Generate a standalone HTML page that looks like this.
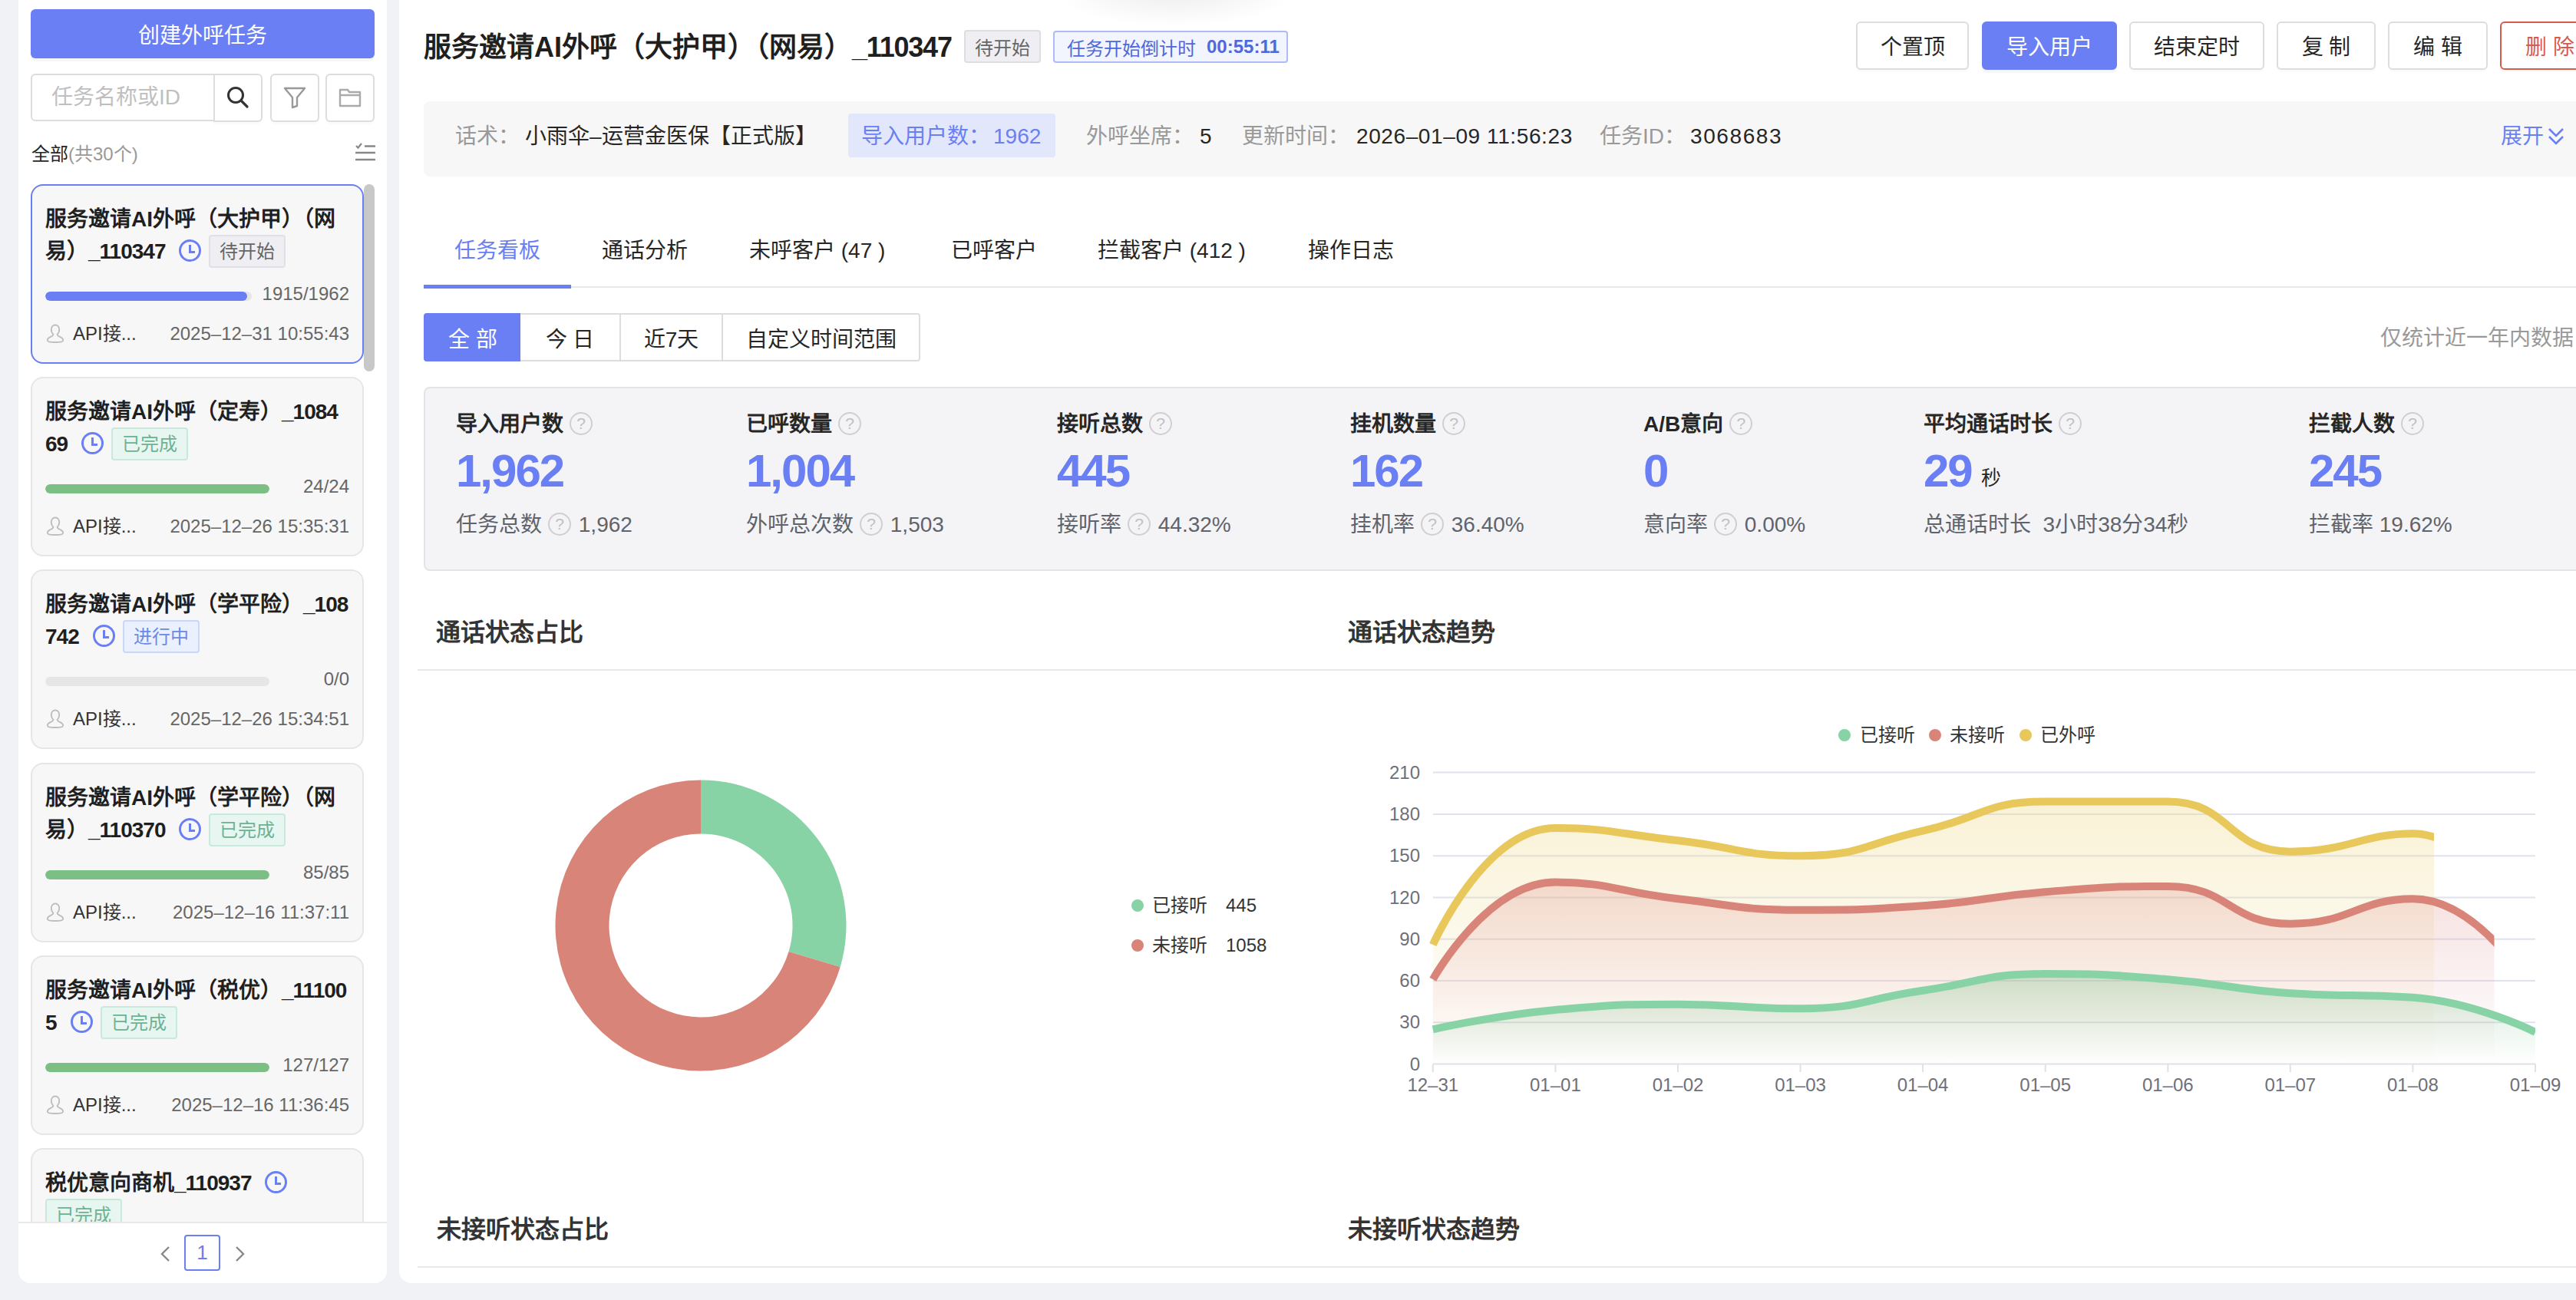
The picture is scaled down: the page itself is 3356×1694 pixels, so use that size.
<!DOCTYPE html>
<html lang="zh-CN"><head><meta charset="utf-8">
<style>
*{box-sizing:border-box;margin:0;padding:0}
html,body{width:3356px;height:1694px;overflow:hidden}
body{background:#f1f2f5;position:relative;font-family:"Liberation Sans",sans-serif;color:#262626}
.abs{position:absolute}
.panel{position:absolute;background:#fff;border-radius:16px}
.btn{position:absolute;border:2px solid #dcdde1;border-radius:6px;background:#fff;box-shadow:0 3px 0 rgba(0,0,0,0.015);padding-bottom:2px;font-size:28px;display:flex;align-items:center;justify-content:center;color:#262626}
.t{position:absolute;white-space:nowrap;line-height:1}
.card{position:absolute;left:40px;width:434px;height:234px;background:#f7f7f8;border:2px solid #e6e6ea;border-radius:16px;overflow:hidden}
.pc{letter-spacing:0}
.dg{letter-spacing:-1px}
.card .ttl{white-space:nowrap;position:absolute;left:17px;top:23px;width:400px;font-size:28px;font-weight:bold;line-height:42px;color:#1f1f1f}
.clock{display:inline-block;width:29px;height:29px;border:3px solid #6a7ff3;border-radius:50%;position:relative;vertical-align:middle;margin-left:18px;margin-right:10px;margin-top:-6px}
.clock:before{content:"";position:absolute;left:10px;top:4px;width:3px;height:10px;background:#6a7ff3}
.clock:after{content:"";position:absolute;left:10px;top:12px;width:8px;height:3px;background:#6a7ff3}
.badge{display:inline-block;font-size:24px;font-weight:normal;line-height:39px;height:43px;padding:0 12px;border:2px solid #e0e0e5;background:#efeff3;color:#666;border-radius:4px;vertical-align:middle;margin-left:0;margin-top:-4px}
.b-done{background:#e8f6f1;border-color:#c8e9dc;color:#6cb393}
.b-run{background:#eaf0fe;border-color:#c9d7fa;color:#6a8ae6}
.prog{position:absolute;left:17px;top:138px;height:12px;border-radius:6px;background:#e6e6e6;overflow:hidden}
.prog i{position:absolute;left:0;top:0;bottom:0;border-radius:6px}
.num{position:absolute;right:17px;top:129px;font-size:24px;color:#666;line-height:24px}
.user{position:absolute;left:18px;top:179px;width:24px;height:26px}
.api{position:absolute;left:53px;top:181px;font-size:24px;line-height:24px;color:#333}
.date{position:absolute;right:17px;top:181px;font-size:24px;line-height:24px;color:#666;letter-spacing:0}
.tab{position:absolute;top:313px;font-size:28px;line-height:28px;color:#262626}
.seg{position:absolute;top:408px;height:63px;border:2px solid #dcdde1;font-size:28px;display:flex;align-items:center;justify-content:center;color:#262626;background:#fff}
.stat{position:absolute;top:0}
.stat .lb{position:absolute;left:0;top:539px;font-size:28px;font-weight:bold;line-height:28px;white-space:nowrap;color:#262626}
.stat .big{position:absolute;left:0;top:584px;font-size:60px;font-weight:bold;line-height:60px;color:#6a7ff3;white-space:nowrap;letter-spacing:-2px}
.stat .sub{position:absolute;left:0;top:670px;font-size:28px;line-height:28px;color:#5f636b;white-space:nowrap}
.q{display:inline-block;width:30px;height:30px;border:2px solid #cfcfd2;border-radius:50%;color:#c0c0c3;font-size:21px;line-height:26px;text-align:center;font-weight:normal;vertical-align:top;margin-left:8px;margin-right:2px;position:relative;top:-2px}
.sec{position:absolute;font-size:32px;font-weight:bold;line-height:32px;color:#333;white-space:nowrap}
.lg{position:absolute;font-size:24px;line-height:24px;color:#333;white-space:nowrap}
.dot{position:absolute;width:16px;height:16px;border-radius:50%}
.ax{position:absolute;font-size:24px;line-height:24px;color:#6e7079;white-space:nowrap}
</style></head><body>
<!-- LEFT PANEL -->
<div class="panel" style="left:24px;top:-20px;width:480px;height:1692px"></div>
<div class="abs" style="left:40px;top:12px;width:448px;height:64px;background:#6a7ff3;border-radius:6px;color:#fff;font-size:28px;display:flex;align-items:center;justify-content:center;box-shadow:0 4px 0 rgba(0,0,0,0.03)">创建外呼任务</div>
<div class="abs" style="left:40px;top:96px;width:240px;height:62px;border:2px solid #dcdde1;border-radius:6px 0 0 6px"></div>
<div class="t" style="left:67px;top:113px;font-size:28px;color:#bfbfbf">任务名称或ID</div>
<div class="btn" style="left:278px;top:96px;width:64px;height:63px;border-radius:0 6px 6px 0">
<svg width="32" height="32" viewBox="0 0 32 32"><circle cx="13" cy="13" r="9.5" fill="none" stroke="#333" stroke-width="3"/><line x1="20" y1="20" x2="28" y2="28" stroke="#333" stroke-width="3.2" stroke-linecap="round"/></svg></div>
<div class="btn" style="left:352px;top:96px;width:64px;height:63px">
<svg width="32" height="32" viewBox="0 0 32 32"><path d="M3 4 H29 L19 16 V27 L13 29 V16 Z" fill="none" stroke="#999" stroke-width="2.4" stroke-linejoin="round"/></svg></div>
<div class="btn" style="left:424px;top:96px;width:64px;height:63px">
<svg width="32" height="32" viewBox="0 0 32 32"><path d="M3 6 H13 L15 9 H29 V27 H3 Z M3 13 H29" fill="none" stroke="#aaa" stroke-width="2.4" stroke-linejoin="round"/></svg></div>
<div class="t" style="left:41px;top:189px;font-size:24px;color:#262626">全部<span style="color:#999">(共30个)</span></div>
<svg class="abs" style="left:463px;top:185px" width="26" height="26" viewBox="0 0 26 26"><path d="M1 5 L3.5 7.5 L8 2" fill="none" stroke="#888" stroke-width="2.2"/><path d="M13 5.5 H25 M1 14 H25 M1 23 H25" stroke="#888" stroke-width="2.6" stroke-linecap="round"/></svg>

<!-- CARDS -->
<div class="abs" style="left:0;top:0;width:520px;height:1592px;overflow:hidden"><div class="card" style="top:240px;border-color:#6a7ff3;height:234px"><div class="ttl">服务邀请AI外呼（大护甲<span class="pc">）</span>（网<br>易）<span class="dg">_110347</span><span class="clock"></span><span class="badge ">待开始</span></div><div class="prog" style="width:269px"><i style="width:97.6%;background:#6a7ff3"></i></div><div class="num">1915/1962</div><svg class="user" viewBox="0 0 24 26"><path d="M12 2.5 C8.6 2.5 6.8 5.2 6.8 8.6 C6.8 11.4 8 13.4 9.4 14.6 C9.4 16.2 8.2 17.2 5.6 18.2 C2.6 19.4 1.8 20.8 1.8 22.4 C1.8 24 3.6 25 12 25 C20.4 25 22.2 24 22.2 22.4 C22.2 20.8 21.4 19.4 18.4 18.2 C15.8 17.2 14.6 16.2 14.6 14.6 C16 13.4 17.2 11.4 17.2 8.6 C17.2 5.2 15.4 2.5 12 2.5 Z" fill="none" stroke="#bdbdbd" stroke-width="1.8"/></svg><div class="api">API接...</div><div class="date">2025–12–31 10:55:43</div></div>
<div class="card" style="top:491px;height:234px"><div class="ttl">服务邀请AI外呼（定寿）<span class="dg">_1084</span><br><span class="dg">69</span><span class="clock"></span><span class="badge b-done">已完成</span></div><div class="prog" style="width:292px"><i style="width:100.0%;background:#7cbf84"></i></div><div class="num">24/24</div><svg class="user" viewBox="0 0 24 26"><path d="M12 2.5 C8.6 2.5 6.8 5.2 6.8 8.6 C6.8 11.4 8 13.4 9.4 14.6 C9.4 16.2 8.2 17.2 5.6 18.2 C2.6 19.4 1.8 20.8 1.8 22.4 C1.8 24 3.6 25 12 25 C20.4 25 22.2 24 22.2 22.4 C22.2 20.8 21.4 19.4 18.4 18.2 C15.8 17.2 14.6 16.2 14.6 14.6 C16 13.4 17.2 11.4 17.2 8.6 C17.2 5.2 15.4 2.5 12 2.5 Z" fill="none" stroke="#bdbdbd" stroke-width="1.8"/></svg><div class="api">API接...</div><div class="date">2025–12–26 15:35:31</div></div>
<div class="card" style="top:742px;height:234px"><div class="ttl">服务邀请AI外呼（学平险）<span class="dg">_108</span><br><span class="dg">742</span><span class="clock"></span><span class="badge b-run">进行中</span></div><div class="prog" style="width:292px"><i style="width:0.0%;background:#7cbf84"></i></div><div class="num">0/0</div><svg class="user" viewBox="0 0 24 26"><path d="M12 2.5 C8.6 2.5 6.8 5.2 6.8 8.6 C6.8 11.4 8 13.4 9.4 14.6 C9.4 16.2 8.2 17.2 5.6 18.2 C2.6 19.4 1.8 20.8 1.8 22.4 C1.8 24 3.6 25 12 25 C20.4 25 22.2 24 22.2 22.4 C22.2 20.8 21.4 19.4 18.4 18.2 C15.8 17.2 14.6 16.2 14.6 14.6 C16 13.4 17.2 11.4 17.2 8.6 C17.2 5.2 15.4 2.5 12 2.5 Z" fill="none" stroke="#bdbdbd" stroke-width="1.8"/></svg><div class="api">API接...</div><div class="date">2025–12–26 15:34:51</div></div>
<div class="card" style="top:994px;height:234px"><div class="ttl">服务邀请AI外呼（学平险<span class="pc">）</span>（网<br>易）<span class="dg">_110370</span><span class="clock"></span><span class="badge b-done">已完成</span></div><div class="prog" style="width:292px"><i style="width:100.0%;background:#7cbf84"></i></div><div class="num">85/85</div><svg class="user" viewBox="0 0 24 26"><path d="M12 2.5 C8.6 2.5 6.8 5.2 6.8 8.6 C6.8 11.4 8 13.4 9.4 14.6 C9.4 16.2 8.2 17.2 5.6 18.2 C2.6 19.4 1.8 20.8 1.8 22.4 C1.8 24 3.6 25 12 25 C20.4 25 22.2 24 22.2 22.4 C22.2 20.8 21.4 19.4 18.4 18.2 C15.8 17.2 14.6 16.2 14.6 14.6 C16 13.4 17.2 11.4 17.2 8.6 C17.2 5.2 15.4 2.5 12 2.5 Z" fill="none" stroke="#bdbdbd" stroke-width="1.8"/></svg><div class="api">API接...</div><div class="date">2025–12–16 11:37:11</div></div>
<div class="card" style="top:1245px;height:234px"><div class="ttl">服务邀请AI外呼（税优）<span class="dg">_11100</span><br><span class="dg">5</span><span class="clock"></span><span class="badge b-done">已完成</span></div><div class="prog" style="width:292px"><i style="width:100.0%;background:#7cbf84"></i></div><div class="num">127/127</div><svg class="user" viewBox="0 0 24 26"><path d="M12 2.5 C8.6 2.5 6.8 5.2 6.8 8.6 C6.8 11.4 8 13.4 9.4 14.6 C9.4 16.2 8.2 17.2 5.6 18.2 C2.6 19.4 1.8 20.8 1.8 22.4 C1.8 24 3.6 25 12 25 C20.4 25 22.2 24 22.2 22.4 C22.2 20.8 21.4 19.4 18.4 18.2 C15.8 17.2 14.6 16.2 14.6 14.6 C16 13.4 17.2 11.4 17.2 8.6 C17.2 5.2 15.4 2.5 12 2.5 Z" fill="none" stroke="#bdbdbd" stroke-width="1.8"/></svg><div class="api">API接...</div><div class="date">2025–12–16 11:36:45</div></div>
<div class="card" style="top:1496px;height:234px"><div class="ttl">税优意向商机<span class="dg">_110937</span><span class="clock"></span><br><span class="badge b-done">已完成</span></div></div></div>
<svg class="abs" style="left:474px;top:240px" width="14" height="244"><rect x="0" y="0" width="14" height="244" rx="7" fill="#c8c8c8"/></svg>
<div class="abs" style="left:24px;top:1592px;width:480px;height:80px;background:#fff;border-top:2px solid #e8e8ec;border-radius:0 0 16px 16px"></div>
<svg class="abs" style="left:206px;top:1622px" width="20" height="24" viewBox="0 0 20 24"><path d="M14 3 L5 12 L14 21" fill="none" stroke="#888" stroke-width="2.4"/></svg>
<div class="abs" style="left:240px;top:1609px;width:47px;height:47px;border:2px solid #6a7ff3;border-radius:4px;color:#6a7ff3;font-size:26px;display:flex;align-items:center;justify-content:center">1</div>
<svg class="abs" style="left:302px;top:1622px" width="20" height="24" viewBox="0 0 20 24"><path d="M6 3 L15 12 L6 21" fill="none" stroke="#888" stroke-width="2.4"/></svg>

<!-- MAIN PANEL -->
<div class="panel" style="left:520px;top:-20px;width:2900px;height:1692px"></div>
<div class="abs" style="left:1370px;top:-60px;width:320px;height:95px;border-radius:50%;background:radial-gradient(ellipse at center,rgba(0,0,0,0.07),rgba(0,0,0,0) 70%)"></div>
<div class="t" style="left:552px;top:44px;font-size:36px;font-weight:bold;color:#1f1f1f">服务邀请AI外呼（大护甲<span class="pc">）</span>（网易）<span style="letter-spacing:-1.2px">_110347</span></div>
<div class="abs" style="left:1256px;top:39px;width:100px;height:43px;border:2px solid #dddde2;background:#efeff3;border-radius:4px;color:#666;font-size:24px;display:flex;align-items:center;justify-content:center">待开始</div>
<div class="abs" style="left:1372px;top:40px;width:306px;height:42px;border:2px solid #aebcf6;background:#f2f5fe;border-radius:4px;color:#4f68dc;font-size:24px;display:flex;align-items:center;padding-left:16px">任务开始倒计时<b style="margin-left:14px">00:55:11</b></div>

<div class="btn" style="left:2418px;top:28px;width:147px;height:63px">个置顶</div>
<div class="btn" style="left:2582px;top:28px;width:176px;height:63px;background:#6a7ff3;border-color:#6a7ff3;color:#fff;box-shadow:0 4px 0 rgba(0,0,0,0.03)">导入用户</div>
<div class="btn" style="left:2774px;top:28px;width:176px;height:63px">结束定时</div>
<div class="btn" style="left:2966px;top:28px;width:129px;height:63px">复&nbsp;制</div>
<div class="btn" style="left:3111px;top:28px;width:130px;height:63px">编&nbsp;辑</div>
<div class="btn" style="left:3257px;top:28px;width:130px;height:63px;border-color:#d65a50;color:#d65a50">删&nbsp;除</div>

<!-- info bar -->
<div class="abs" style="left:552px;top:132px;width:2900px;height:98px;background:#f7f7f7;border-radius:8px"></div>
<div class="t" style="left:593px;top:164px;font-size:28px;color:#999">话术：</div>
<div class="t" style="left:684px;top:164px;font-size:28px;color:#262626">小雨伞–运营金医保【正式版】</div>
<div class="abs" style="left:1105px;top:148px;width:270px;height:57px;background:#e3e7fc;border-radius:4px"></div>
<div class="t" style="left:1122px;top:164px;font-size:28px;color:#6a7ff3">导入用户数：<span style="margin-left:4px">1962</span></div>
<div class="t" style="left:1415px;top:164px;font-size:28px;color:#999">外呼坐席：</div>
<div class="t" style="left:1563px;top:164px;font-size:28px;color:#262626">5</div>
<div class="t" style="left:1618px;top:164px;font-size:28px;color:#999">更新时间：</div>
<div class="t" style="left:1767px;top:164px;font-size:28px;color:#262626;letter-spacing:0.6px">2026–01–09 11:56:23</div>
<div class="t" style="left:2084px;top:164px;font-size:28px;color:#999">任务ID：</div>
<div class="t" style="left:2202px;top:164px;font-size:28px;color:#262626;letter-spacing:1.6px">3068683</div>
<div class="t" style="left:3258px;top:164px;font-size:28px;color:#6a7ff3">展开</div>
<svg class="abs" style="left:3318px;top:164px" width="24" height="30" viewBox="0 0 24 30"><path d="M3 4 L12 13 L21 4 M3 14 L12 23 L21 14" fill="none" stroke="#6a7ff3" stroke-width="2.6"/></svg>

<!-- tabs -->
<div class="abs" style="left:552px;top:373px;width:2900px;height:2px;background:#e8e8ec"></div>
<div class="abs" style="left:552px;top:371px;width:192px;height:5px;background:#6a7ff3"></div>
<div class="tab" style="left:592px;color:#6a7ff3">任务看板</div>
<div class="tab" style="left:784px">通话分析</div>
<div class="tab" style="left:976px">未呼客户 (47 )</div>
<div class="tab" style="left:1239px">已呼客户</div>
<div class="tab" style="left:1430px">拦截客户 (412 )</div>
<div class="tab" style="left:1704px">操作日志</div>

<!-- segmented -->
<div class="seg" style="left:552px;width:128px;background:#6a7ff3;border-color:#6a7ff3;color:#fff;border-radius:4px 0 0 4px">全&nbsp;部</div>
<div class="seg" style="left:678px;width:131px;border-left:none">今&nbsp;日</div>
<div class="seg" style="left:807px;width:135px">近7天</div>
<div class="seg" style="left:940px;width:259px;border-radius:0 4px 4px 0">自定义时间范围</div>
<div class="t" style="left:3101px;top:427px;font-size:28px;color:#999">仅统计近一年内数据</div>

<!-- stats -->
<div class="abs" style="left:552px;top:504px;width:2900px;height:240px;background:#f4f4f7;border:2px solid #e4e4e8;border-radius:8px"></div>
<div class="stat" style="left:594px"><div class="lb">导入用户数<span class="q">?</span></div><div class="big">1,962</div><div class="sub">任务总数<span class="q">?</span> 1,962</div></div>
<div class="stat" style="left:972px"><div class="lb">已呼数量<span class="q">?</span></div><div class="big">1,004</div><div class="sub">外呼总次数<span class="q">?</span> 1,503</div></div>
<div class="stat" style="left:1377px"><div class="lb">接听总数<span class="q">?</span></div><div class="big">445</div><div class="sub">接听率<span class="q">?</span> 44.32%</div></div>
<div class="stat" style="left:1759px"><div class="lb">挂机数量<span class="q">?</span></div><div class="big">162</div><div class="sub">挂机率<span class="q">?</span> 36.40%</div></div>
<div class="stat" style="left:2141px"><div class="lb">A/B意向<span class="q">?</span></div><div class="big">0</div><div class="sub">意向率<span class="q">?</span> 0.00%</div></div>
<div class="stat" style="left:2506px"><div class="lb">平均通话时长<span class="q">?</span></div><div class="big">29<span style="font-size:26px;font-weight:normal;color:#262626;margin-left:12px;letter-spacing:0;position:relative;top:-2px">秒</span></div><div class="sub">总通话时长&nbsp;&nbsp;3小时38分34秒</div></div>
<div class="stat" style="left:3008px"><div class="lb">拦截人数<span class="q">?</span></div><div class="big">245</div><div class="sub">拦截率 19.62%</div></div>

<!-- charts -->
<div class="sec" style="left:568px;top:808px">通话状态占比</div>
<div class="sec" style="left:1756px;top:808px">通话状态趋势</div>
<div class="abs" style="left:544px;top:872px;width:2900px;height:2px;background:#e8e8ea"></div>

<svg class="abs" style="left:0;top:0" width="3356" height="1694" viewBox="0 0 3356 1694">
<defs>
<linearGradient id="gy" x1="0" y1="0" x2="0" y2="1"><stop offset="0" stop-color="#efd98a" stop-opacity="0.35"/><stop offset="1" stop-color="#efd98a" stop-opacity="0"/></linearGradient>
<linearGradient id="gr" x1="0" y1="0" x2="0" y2="1"><stop offset="0" stop-color="#df9590" stop-opacity="0.3"/><stop offset="1" stop-color="#e3a0a8" stop-opacity="0"/></linearGradient>
<linearGradient id="gg" x1="0" y1="0" x2="0" y2="1"><stop offset="0" stop-color="#7fbf8c" stop-opacity="0.35"/><stop offset="1" stop-color="#7fbf8c" stop-opacity="0"/></linearGradient>
<clipPath id="cy"><rect x="1800" y="900" width="1371" height="500"/></clipPath>
<clipPath id="cr"><rect x="1800" y="900" width="1449.5" height="500"/></clipPath>
<clipPath id="cg"><rect x="1800" y="900" width="1503" height="500"/></clipPath>
</defs>
<!-- donut -->
<path d="M913.00,1016.50 A189.5,189.5 0 0 1 1094.61,1260.10 L1027.53,1240.11 A119.5,119.5 0 0 0 913.00,1086.50 Z" fill="#88d3a5"/>
<path d="M1094.61,1260.10 A189.5,189.5 0 1 1 913.00,1016.50 L913.00,1086.50 A119.5,119.5 0 1 0 1027.53,1240.11 Z" fill="#d98478"/>
<!-- grid -->
<g stroke="#e0e3ed" stroke-width="2">
<line x1="1867" y1="1006.6" x2="3303" y2="1006.6"/>
<line x1="1867" y1="1060.9" x2="3303" y2="1060.9"/>
<line x1="1867" y1="1115.2" x2="3303" y2="1115.2"/>
<line x1="1867" y1="1169.5" x2="3303" y2="1169.5"/>
<line x1="1867" y1="1223.7" x2="3303" y2="1223.7"/>
<line x1="1867" y1="1278.0" x2="3303" y2="1278.0"/>
<line x1="1867" y1="1332.3" x2="3303" y2="1332.3"/>
</g>
<g stroke="#e0e1e6" stroke-width="2">
<line x1="1867" y1="1386.6" x2="3303" y2="1386.6"/>
<line x1="1866.8" y1="1386.6" x2="1866.8" y2="1397"/>
<line x1="2026.4" y1="1386.6" x2="2026.4" y2="1397"/>
<line x1="2186.0" y1="1386.6" x2="2186.0" y2="1397"/>
<line x1="2345.5" y1="1386.6" x2="2345.5" y2="1397"/>
<line x1="2505.1" y1="1386.6" x2="2505.1" y2="1397"/>
<line x1="2664.7" y1="1386.6" x2="2664.7" y2="1397"/>
<line x1="2824.3" y1="1386.6" x2="2824.3" y2="1397"/>
<line x1="2983.8" y1="1386.6" x2="2983.8" y2="1397"/>
<line x1="3143.4" y1="1386.6" x2="3143.4" y2="1397"/>
<line x1="3303.0" y1="1386.6" x2="3303.0" y2="1397"/>
</g>
<path d="M1866.8,1231.0 C1866.8,1231.0 1934.0,1079.0 2026.4,1079.0 C2093.6,1079.0 2106.3,1086.2 2186.0,1095.3 C2265.8,1104.3 2266.3,1115.2 2345.5,1115.2 C2425.8,1115.2 2425.6,1100.2 2505.1,1082.6 C2585.2,1064.9 2583.8,1044.6 2664.7,1044.6 C2743.4,1044.6 2747.6,1044.6 2824.3,1044.6 C2907.1,1044.6 2901.4,1109.7 2983.8,1109.7 C3061.0,1109.7 3076.9,1086.2 3143.4,1086.2 C3236.4,1086.2 3303.0,1245.5 3303.0,1245.5 L3303.0,1386.6 L1866.8,1386.6 Z" fill="url(#gy)" clip-path="url(#cy)"/>
<path d="M1866.8,1276.2 C1866.8,1276.2 1937.3,1149.6 2026.4,1149.6 C2096.8,1149.6 2106.0,1162.2 2186.0,1171.3 C2265.5,1180.3 2265.6,1185.7 2345.5,1185.7 C2425.2,1185.7 2425.6,1185.7 2505.1,1180.3 C2585.1,1174.9 2584.7,1168.6 2664.7,1162.2 C2744.3,1155.9 2746.2,1155.0 2824.3,1155.0 C2905.8,1155.0 2903.1,1203.8 2983.8,1203.8 C3062.7,1203.8 3072.3,1171.3 3143.4,1171.3 C3231.9,1171.3 3303.0,1296.1 3303.0,1296.1 L3303.0,1386.6 L1866.8,1386.6 Z" fill="url(#gr)" clip-path="url(#cr)"/>
<path d="M1866.8,1341.4 C1866.8,1341.4 1946.1,1323.3 2026.4,1316.0 C2105.7,1308.8 2106.1,1308.8 2186.0,1308.8 C2265.7,1308.8 2266.2,1314.2 2345.5,1314.2 C2425.7,1314.2 2425.3,1302.0 2505.1,1290.7 C2584.8,1279.4 2584.6,1269.0 2664.7,1269.0 C2744.2,1269.0 2744.7,1269.9 2824.3,1276.2 C2904.3,1282.6 2903.8,1288.9 2983.8,1294.3 C3063.4,1299.7 3065.2,1294.3 3143.4,1299.7 C3224.7,1305.4 3303.0,1345.0 3303.0,1345.0 L3303.0,1386.6 L1866.8,1386.6 Z" fill="url(#gg)" clip-path="url(#cg)"/>
<path d="M1866.8,1231.0 C1866.8,1231.0 1934.0,1079.0 2026.4,1079.0 C2093.6,1079.0 2106.3,1086.2 2186.0,1095.3 C2265.8,1104.3 2266.3,1115.2 2345.5,1115.2 C2425.8,1115.2 2425.6,1100.2 2505.1,1082.6 C2585.2,1064.9 2583.8,1044.6 2664.7,1044.6 C2743.4,1044.6 2747.6,1044.6 2824.3,1044.6 C2907.1,1044.6 2901.4,1109.7 2983.8,1109.7 C3061.0,1109.7 3076.9,1086.2 3143.4,1086.2 C3236.4,1086.2 3303.0,1245.5 3303.0,1245.5" fill="none" stroke="#e8c75b" stroke-width="10" clip-path="url(#cy)"/>
<path d="M1866.8,1276.2 C1866.8,1276.2 1937.3,1149.6 2026.4,1149.6 C2096.8,1149.6 2106.0,1162.2 2186.0,1171.3 C2265.5,1180.3 2265.6,1185.7 2345.5,1185.7 C2425.2,1185.7 2425.6,1185.7 2505.1,1180.3 C2585.1,1174.9 2584.7,1168.6 2664.7,1162.2 C2744.3,1155.9 2746.2,1155.0 2824.3,1155.0 C2905.8,1155.0 2903.1,1203.8 2983.8,1203.8 C3062.7,1203.8 3072.3,1171.3 3143.4,1171.3 C3231.9,1171.3 3303.0,1296.1 3303.0,1296.1" fill="none" stroke="#d98478" stroke-width="10" clip-path="url(#cr)"/>
<path d="M1866.8,1341.4 C1866.8,1341.4 1946.1,1323.3 2026.4,1316.0 C2105.7,1308.8 2106.1,1308.8 2186.0,1308.8 C2265.7,1308.8 2266.2,1314.2 2345.5,1314.2 C2425.7,1314.2 2425.3,1302.0 2505.1,1290.7 C2584.8,1279.4 2584.6,1269.0 2664.7,1269.0 C2744.2,1269.0 2744.7,1269.9 2824.3,1276.2 C2904.3,1282.6 2903.8,1288.9 2983.8,1294.3 C3063.4,1299.7 3065.2,1294.3 3143.4,1299.7 C3224.7,1305.4 3303.0,1345.0 3303.0,1345.0" fill="none" stroke="#87d3a6" stroke-width="10" clip-path="url(#cg)"/>
</svg>
<div class="dot" style="left:1474px;top:1172px;background:#88d3a5"></div>
<div class="lg" style="left:1501px;top:1168px">已接听<span style="margin-left:24px">445</span></div>
<div class="dot" style="left:1474px;top:1224px;background:#d98478"></div>
<div class="lg" style="left:1501px;top:1220px">未接听<span style="margin-left:24px">1058</span></div>

<div class="dot" style="left:2395px;top:950px;background:#88d3a5"></div>
<div class="lg" style="left:2423px;top:946px">已接听</div>
<div class="dot" style="left:2513px;top:950px;background:#d98478"></div>
<div class="lg" style="left:2540px;top:946px">未接听</div>
<div class="dot" style="left:2631px;top:950px;background:#e8c75b"></div>
<div class="lg" style="left:2658px;top:946px">已外呼</div>
<div class="ax" style="left:1806.8px;top:1402px;width:120px;text-align:center">12–31</div>
<div class="ax" style="left:1966.4px;top:1402px;width:120px;text-align:center">01–01</div>
<div class="ax" style="left:2126.0px;top:1402px;width:120px;text-align:center">01–02</div>
<div class="ax" style="left:2285.5px;top:1402px;width:120px;text-align:center">01–03</div>
<div class="ax" style="left:2445.1px;top:1402px;width:120px;text-align:center">01–04</div>
<div class="ax" style="left:2604.7px;top:1402px;width:120px;text-align:center">01–05</div>
<div class="ax" style="left:2764.3px;top:1402px;width:120px;text-align:center">01–06</div>
<div class="ax" style="left:2923.8px;top:1402px;width:120px;text-align:center">01–07</div>
<div class="ax" style="left:3083.4px;top:1402px;width:120px;text-align:center">01–08</div>
<div class="ax" style="left:3243.0px;top:1402px;width:120px;text-align:center">01–09</div>
<div class="ax" style="left:1730px;top:1374.6px;width:120px;text-align:right">0</div>
<div class="ax" style="left:1730px;top:1320.3px;width:120px;text-align:right">30</div>
<div class="ax" style="left:1730px;top:1266.0px;width:120px;text-align:right">60</div>
<div class="ax" style="left:1730px;top:1211.7px;width:120px;text-align:right">90</div>
<div class="ax" style="left:1730px;top:1157.5px;width:120px;text-align:right">120</div>
<div class="ax" style="left:1730px;top:1103.2px;width:120px;text-align:right">150</div>
<div class="ax" style="left:1730px;top:1048.9px;width:120px;text-align:right">180</div>
<div class="ax" style="left:1730px;top:994.6px;width:120px;text-align:right">210</div>

<div class="sec" style="left:569px;top:1586px">未接听状态占比</div>
<div class="sec" style="left:1756px;top:1586px">未接听状态趋势</div>
<div class="abs" style="left:544px;top:1650px;width:2900px;height:2px;background:#e8e8ea"></div>

</body></html>
